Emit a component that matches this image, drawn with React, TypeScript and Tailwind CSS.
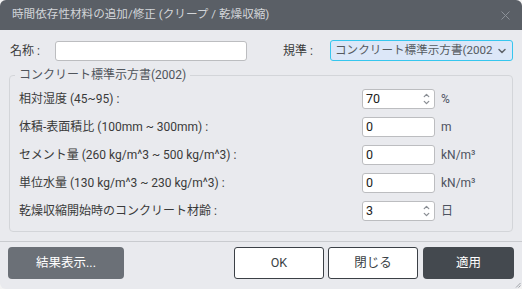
import { ChevronDown, ChevronUp } from "lucide-react";

const rows = [
  { label: "相対湿度 (45~95) :", value: "70", unit: "%", spin: true },
  { label: "体積-表面積比 (100mm ~ 300mm) :", value: "0", unit: "m", spin: false },
  { label: "セメント量 (260 kg/m^3 ~ 500 kg/m^3) :", value: "0", unit: "kN/m³", spin: false },
  { label: "単位水量 (130 kg/m^3 ~ 230 kg/m^3) :", value: "0", unit: "kN/m³", spin: false },
  { label: "乾燥収縮開始時のコンクリート材齢 :", value: "3", unit: "日", spin: true },
];

const App = () => {
  return (
    <div className="h-[289px] w-[522px] bg-[#f3f3f3] font-['Roboto','Noto_Sans_CJK_JP',sans-serif] text-[12px] text-[#3a3a3a]">
      <div className="relative flex h-full flex-col overflow-hidden rounded-[6px] bg-[#e9eaee]">
        {/* Title bar */}
        <div className="flex h-[30px] shrink-0 items-center justify-between bg-[#5a5f66] pl-[12px] pr-[12px]">
          <span className="text-[11.6px] text-[#d2d5d9]">時間依存性材料の追加/修正 (クリープ / 乾燥収縮)</span>
          <svg width="9" height="9" viewBox="0 0 9 9" className="mt-[1px]">
            <path d="M0.5 0.5 L8.5 8.5 M8.5 0.5 L0.5 8.5" stroke="#8c9198" strokeWidth="1" />
          </svg>
        </div>

        {/* Name / standard */}
        <div className="mt-[10px] flex h-[21px] items-center pl-[10px]">
          <span className="w-[45px]">名称 :</span>
          <input className="h-[20px] w-[192px] rounded-[3px] border border-[#bcbdc0] bg-white outline-none" />
          <span className="ml-[36px] w-[47px]">規準 :</span>
          <div className="flex h-[21px] w-[183px] items-center overflow-hidden rounded-[3px] border border-[#36c6ee] bg-[#dce7f8] pl-[4px] pr-[4px] text-[11.6px] text-[#555a60]">
            <span className="min-w-0 flex-1 overflow-hidden whitespace-nowrap">コンクリート標準示方書(2002</span>
            <ChevronDown className="ml-[3px] h-[12px] w-[12px] shrink-0 text-[#60646a]" strokeWidth={3} />
          </div>
        </div>

        {/* Group */}
        <fieldset className="mx-[9px] mt-[6px] rounded-[4px] border border-[#d3d5d9] pb-[10px] pl-[5px] pr-[8px] pt-[6px]">
          <legend className="px-[4px] text-[12px] leading-[16px] text-[#50555c]">コンクリート標準示方書(2002)</legend>
          <div className="flex flex-col gap-[8px] pl-[4px]">
            {rows.map((row) => (
              <div key={row.label} className="flex h-[20px] items-center">
                <span className="w-[343px] whitespace-nowrap">{row.label}</span>
                <div className="relative flex h-[20px] w-[73px] items-center rounded-[3px] border border-[#bcbdc0] bg-white pl-[3px] text-[12.5px] text-[#222]">
                  {row.value}
                  {row.spin && (
                    <div className="absolute right-[3px] top-[1px] flex flex-col text-[#8a8e94]">
                      <ChevronUp className="-mb-[2px] h-[9px] w-[9px]" strokeWidth={3.5} />
                      <ChevronDown className="h-[9px] w-[9px]" strokeWidth={3.5} />
                    </div>
                  )}
                </div>
                <span className="ml-[6px] text-[#4c5260]">{row.unit}</span>
              </div>
            ))}
          </div>
        </fieldset>

        <div className="mt-[9px] h-px shrink-0 bg-[#c9cbcf]" />

        {/* Buttons */}
        <div className="mt-[5px] flex px-[8px]">
          <button className="h-[32px] w-[116px] rounded-[4px] bg-[#6b7077] text-[12.5px] text-white">結果表示...</button>
          <button className="ml-auto h-[32px] w-[90px] rounded-[3px] border border-[#3b4046] bg-white text-[12.5px] text-[#3a3f45]">OK</button>
          <button className="ml-[4px] h-[32px] w-[90px] rounded-[3px] border border-[#3b4046] bg-white text-[12.5px] text-[#3a3f45]">閉じる</button>
          <button className="ml-[5px] h-[32px] w-[91px] rounded-[4px] bg-[#44494f] text-[12.5px] text-white">適用</button>
        </div>

        <svg width="6" height="6" viewBox="0 0 6 6" className="absolute bottom-[1px] right-[1px]">
          <path d="M5.5 1 L1 5.5 M5.5 3.5 L3.5 5.5" stroke="#a0a3a8" strokeWidth="1" />
        </svg>
      </div>
    </div>
  );
};

export default App;
